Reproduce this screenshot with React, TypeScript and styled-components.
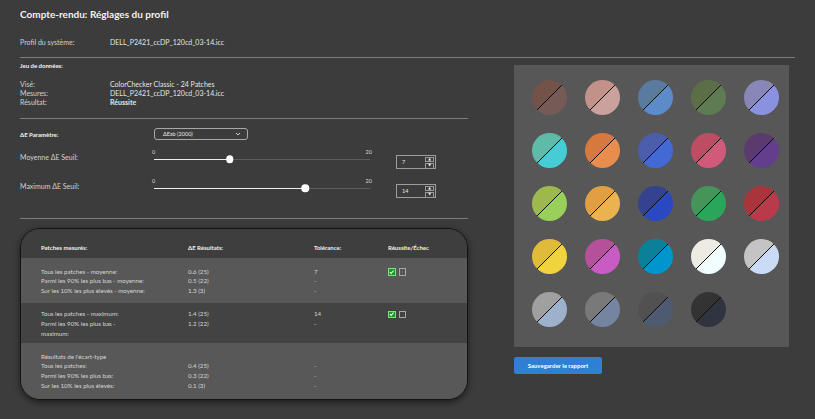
import React from "react";
import styled, { createGlobalStyle } from "styled-components";

const FONT = `Lato, "Noto Sans", "DejaVu Sans", sans-serif`;

const GlobalStyle = createGlobalStyle`
  html, body { margin: 0; padding: 0; background: #3c3c3c; }
  body {
    font-family: ${FONT};
    color: #d2d2d2;
    width: 815px;
    height: 419px;
    overflow: hidden;
    font-size: 7px;
  }
  * { box-sizing: border-box; }
`;

const Page = styled.div`
  padding: 0 20px;
`;

const Title = styled.h1`
  margin: 0;
  padding-top: 7px;
  font-size: 10px;
  line-height: 14px;
  font-weight: 700;
  color: #f2f2f2;
`;

const KeyValue = styled.div<{ $top: number; $lh: number }>`
  display: grid;
  grid-template-columns: 90px 1fr;
  margin-top: ${(p) => p.$top}px;
  line-height: ${(p) => p.$lh}px;
  font-size: 7px;
`;

const Val = styled.span<{ $bold?: boolean }>`
  color: #e4e4e4;
  font-weight: ${(p) => (p.$bold ? 700 : 400)};
`;

const Divider = styled.div<{ $top: number }>`
  height: 1px;
  margin-top: ${(p) => p.$top}px;
  background: #7c7c7c;
`;

const Body = styled.div`
  display: flex;
  align-items: flex-start;
`;

const LeftCol = styled.div`
  width: 448px;
  flex: none;
`;

const SectionHead = styled.div<{ $top: number }>`
  margin-top: ${(p) => p.$top}px;
  line-height: 10px;
  font-size: 6px;
  font-weight: 700;
  color: #f4f4f4;
`;

const ParamRow = styled.div`
  margin-top: 9px;
  margin-bottom: 6.5px;
  display: flex;
  align-items: center;
  height: 12px;
`;

const ParamLabel = styled.div`
  width: 134px;
  font-size: 6px;
  font-weight: 700;
  color: #f4f4f4;
`;

const Select = styled.div`
  width: 94px;
  height: 12px;
  border: 1px solid #a8a8a8;
  border-radius: 3px;
  padding: 0 6px 0 8px;
  display: flex;
  align-items: center;
  justify-content: space-between;
  font-size: 5.5px;
  color: #e8e8e8;
`;

const SliderRow = styled.div`
  display: grid;
  grid-template-columns: 134px 216px 26px 40px;
  height: 29px;
`;

const SliderLabel = styled.div`
  padding-top: 6px;
  line-height: 9.5px;
  font-size: 7px;
  color: #d2d2d2;
`;

const SliderBox = styled.div`
  padding-top: 1px;
`;

const Ticks = styled.div`
  display: flex;
  justify-content: space-between;
  margin: 0 -2px;
  line-height: 9px;
  font-size: 5.5px;
  color: #d8d8d8;
`;

const Track = styled.div`
  position: relative;
  margin-top: 2px;
  height: 1.5px;
  background: #5c5c5c;
`;

const Fill = styled.div`
  height: 100%;
  background: #ececec;
`;

const Thumb = styled.div`
  position: absolute;
  top: 50%;
  width: 7.5px;
  height: 7.5px;
  border-radius: 50%;
  background: #ffffff;
  transform: translate(-50%, -50%);
`;

const Spin = styled.div`
  grid-column: 4;
  margin-top: 8px;
  height: 14px;
  border: 1px solid #9e9e9e;
  display: flex;
  align-items: stretch;
`;

const SpinValue = styled.div`
  flex: 1;
  display: flex;
  align-items: center;
  padding-left: 5px;
  font-size: 5.5px;
  color: #e6e6e6;
`;

const Stepper = styled.div`
  width: 10px;
  display: flex;
  flex-direction: column;
  padding: 1px 1px 1px 0;
  gap: 1px;
`;

const StepBtn = styled.div`
  flex: 1;
  border: 1px solid #9a9a9a;
  display: flex;
  align-items: center;
  justify-content: center;
  font-size: 3.5px;
  line-height: 1;
  color: #f0f0f0;
`;

const Card = styled.div`
  margin-top: 9px;
  border: 1px solid #141414;
  border-radius: 20px;
  overflow: hidden;
  box-shadow: 0 2px 6px rgba(0, 0, 0, 0.55);
`;

const TRow = styled.div<{ $bg: string; $pt: number; $pb: number }>`
  display: grid;
  grid-template-columns: 147px 126px 74px 1fr;
  padding: ${(p) => p.$pt}px 0 ${(p) => p.$pb}px 20px;
  background: ${(p) => p.$bg};
`;

const HeadCell = styled.div`
  line-height: 10px;
  font-size: 6px;
  font-weight: 700;
  color: #f0f0f0;
`;

const Cell = styled.div`
  line-height: 9.7px;
  font-size: 6.2px;
  color: #d6d6d6;
  white-space: nowrap;
`;

const Checks = styled.div`
  display: flex;
  gap: 3px;
  padding-top: 1.5px;
`;

const Box = styled.div<{ $on?: boolean }>`
  width: 7.5px;
  height: 7.5px;
  border: 1px solid ${(p) => (p.$on ? "#7fe07f" : "#a8a8a8")};
  background: ${(p) => (p.$on ? "#169c22" : "transparent")};
  display: flex;
  align-items: center;
  justify-content: center;
`;

const RightCol = styled.div`
  margin-left: 46px;
  margin-top: 7px;
`;

const SwatchPanel = styled.div`
  width: 275px;
  height: 282px;
  background: #575757;
  padding: 15px 10px 0 18px;
  display: grid;
  grid-template-columns: repeat(5, 35px);
  grid-auto-rows: 35px;
  column-gap: 18px;
  row-gap: 18px;
  align-content: start;
`;

const Swatch = styled.div<{ $a: string; $b: string }>`
  width: 35px;
  height: 35px;
  border-radius: 50%;
  background: linear-gradient(
    135deg,
    ${(p) => p.$a} 0,
    ${(p) => p.$a} calc(50% - 0.6px),
    #0a0a0a calc(50% - 0.6px),
    #0a0a0a calc(50% + 0.6px),
    ${(p) => p.$b} calc(50% + 0.6px),
    ${(p) => p.$b} 100%
  );
`;

const SaveButton = styled.button`
  margin-top: 10px;
  width: 88px;
  height: 17px;
  border: none;
  border-radius: 2px;
  background: #2f7fd5;
  color: #ffffff;
  font-family: ${FONT};
  font-size: 6px;
  font-weight: 700;
  padding: 0;
`;

const swatches: [string, string][] = [
  ["#735249", "#765a55"],
  ["#c2918a", "#cba19d"],
  ["#5a7ba0", "#5b8bc8"],
  ["#5b6e48", "#5e7c53"],
  ["#8a86b8", "#8a91df"],
  ["#60baa8", "#45cdd5"],
  ["#d7793e", "#e78d4e"],
  ["#4b5dab", "#4369d5"],
  ["#bd4d63", "#d15a7b"],
  ["#5b3a6e", "#633e8d"],
  ["#9db94b", "#99cf5b"],
  ["#e0a041", "#ebb34d"],
  ["#34428f", "#2a48c1"],
  ["#45945a", "#2aa65b"],
  ["#aa343c", "#b93a4b"],
  ["#e0bb3a", "#f1d43d"],
  ["#b5509b", "#c95bc5"],
  ["#0b8199", "#0095cd"],
  ["#ecebe4", "#f1fdff"],
  ["#c4c4c4", "#cadcf5"],
  ["#a0a0a0", "#9db1cc"],
  ["#797979", "#7584a0"],
  ["#515151", "#4e5a70"],
  ["#333333", "#2f3440"],
];

const Chevron = () => (
  <svg width="6" height="4" viewBox="0 0 6 4">
    <path d="M1 1 L3 3 L5 1" fill="none" stroke="#e0e0e0" strokeWidth="0.9" />
  </svg>
);

const Check = () => (
  <svg width="6" height="6" viewBox="0 0 6 6">
    <path d="M1 3.2 L2.4 4.6 L5 1.4" fill="none" stroke="#ffffff" strokeWidth="1.1" />
  </svg>
);

function Slider({ label, value }: { label: string; value: number }) {
  const pct = (value / 20) * 100;
  return (
    <SliderRow>
      <SliderLabel>{label}</SliderLabel>
      <SliderBox>
        <Ticks>
          <span>0</span>
          <span>20</span>
        </Ticks>
        <Track>
          <Fill style={{ width: `${pct}%` }} />
          <Thumb style={{ left: `${pct}%` }} />
        </Track>
      </SliderBox>
      <Spin>
        <SpinValue>{value}</SpinValue>
        <Stepper>
          <StepBtn>▲</StepBtn>
          <StepBtn>▼</StepBtn>
        </Stepper>
      </Spin>
    </SliderRow>
  );
}

function PassFail() {
  return (
    <Checks>
      <Box $on>
        <Check />
      </Box>
      <Box />
    </Checks>
  );
}

export default function App() {
  return (
    <>
      <GlobalStyle />
      <Page>
        <Title>Compte-rendu: Réglages du profil</Title>
        <KeyValue $top={16} $lh={10}>
          <span>Profil du système:</span>
          <Val>DELL_P2421_ccDP_120cd_03-14.icc</Val>
        </KeyValue>
        <Divider $top={10} />
        <Body>
          <LeftCol>
            <SectionHead $top={3}>Jeu de données:</SectionHead>
            <KeyValue $top={8.5} $lh={9}>
              <span>Visé:</span>
              <Val>ColorChecker Classic - 24 Patches</Val>
              <span>Mesures:</span>
              <Val>DELL_P2421_ccDP_120cd_03-14.icc</Val>
              <span>Résultat:</span>
              <Val $bold>Réussite</Val>
            </KeyValue>
            <Divider $top={11.5} />
            <ParamRow>
              <ParamLabel>ΔE Paramètre:</ParamLabel>
              <Select>
                <span>ΔEab (2000)</span>
                <Chevron />
              </Select>
            </ParamRow>
            <Slider label="Moyenne ΔE Seuil:" value={7} />
            <Slider label="Maximum ΔE Seuil:" value={14} />
            <Divider $top={13} />
            <Card>
              <TRow $bg="#3e3e3e" $pt={14} $pb={5}>
                <HeadCell>Patches mesurés:</HeadCell>
                <HeadCell>ΔE Résultats:</HeadCell>
                <HeadCell>Tolérance:</HeadCell>
                <HeadCell>Réussite/Échec</HeadCell>
              </TRow>
              <TRow $bg="#585858" $pt={9} $pb={7}>
                <Cell>
                  Tous les patches - moyenne:
                  <br />
                  Parmi les 90% les plus bas - moyenne:
                  <br />
                  Sur les 10% les plus élevés - moyenne:
                </Cell>
                <Cell>
                  0.6 (25)
                  <br />
                  0.5 (22)
                  <br />
                  1.3 (3)
                </Cell>
                <Cell>
                  7
                  <br />-
                  <br />-
                </Cell>
                <PassFail />
              </TRow>
              <TRow $bg="#434343" $pt={6.5} $pb={4.5}>
                <Cell>
                  Tous les patches - maximum:
                  <br />
                  Parmi les 90% les plus bas -
                  <br />
                  maximum:
                </Cell>
                <Cell>
                  1.4 (25)
                  <br />
                  1.2 (22)
                </Cell>
                <Cell>
                  14
                  <br />-
                </Cell>
                <PassFail />
              </TRow>
              <TRow $bg="#585858" $pt={9} $pb={8}>
                <Cell>
                  Résultats de l'écart-type
                  <br />
                  Tous les patches:
                  <br />
                  Parmi les 90% les plus bas:
                  <br />
                  Sur les 10% les plus élevés:
                </Cell>
                <Cell>
                  <br />
                  0.4 (25)
                  <br />
                  0.3 (22)
                  <br />
                  0.1 (3)
                </Cell>
                <Cell>
                  <br />-
                  <br />-
                  <br />-
                </Cell>
                <div />
              </TRow>
            </Card>
          </LeftCol>
          <RightCol>
            <SwatchPanel>
              {swatches.map(([a, b], i) => (
                <Swatch key={i} $a={a} $b={b} />
              ))}
            </SwatchPanel>
            <SaveButton>Sauvegarder le rapport</SaveButton>
          </RightCol>
        </Body>
      </Page>
    </>
  );
}
